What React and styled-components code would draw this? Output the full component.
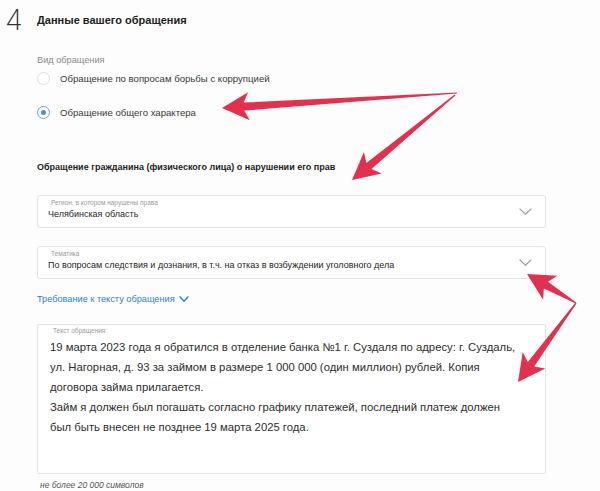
import React from 'react';
import styled, { createGlobalStyle } from 'styled-components';

const Global = createGlobalStyle`
  html, body { margin: 0; padding: 0; background: #fdfdfd; }
  body { font-family: "Liberation Sans", Arial, sans-serif; color: #2b2b2b; }
`;

const Page = styled.div`
  position: relative; width: 600px; height: 491px; overflow: hidden;
  background: #fdfdfd;
`;
const Header = styled.div`
  display: flex; align-items: flex-start; padding: 5px 0 0 5px;
`;
const StepNum = styled.div`
  width: 32px; font-family: Inter, "Liberation Sans", sans-serif;
  font-weight: 200; font-size: 29px; line-height: 30px; color: #333;
`;
const H1 = styled.h1`
  margin: 9px 0 0; font-size: 11px; font-weight: bold; color: #222;
`;
const Content = styled.div`
  margin-left: 37px; width: 509px;
`;
const Caption = styled.div`
  margin-top: 20px; font-size: 9.2px; color: #8a8a8a;
`;
const RadioRow = styled.label`
  display: flex; align-items: center; gap: 10px;
  margin-top: ${p => p.$top}px; font-size: 9.6px; color: #3a3a3a;
`;
const RadioDot = styled.span`
  position: relative; width: 11px; height: 11px; border-radius: 50%;
  border: 1px solid ${p => p.$on ? '#6fa3d8' : '#dedede'}; background: #fff;
  box-sizing: content-box;
  &::after {
    content: ''; display: ${p => p.$on ? 'block' : 'none'};
    position: absolute; left: 3px; top: 3px; width: 5px; height: 5px;
    border-radius: 50%; background: #4a8fd6;
  }
`;
const H2 = styled.h2`
  margin: 43px 0 0; font-size: 9px; font-weight: bold; color: #1e1e1e;
`;
const Box = styled.div`
  display: flex; align-items: center; box-sizing: border-box;
  height: 33px; margin-top: ${p => p.$top}px;
  border: 1px solid #e4e4e4; border-radius: 3px; background: #fff;
  padding: 0 13px 0 10px;
`;
const BoxText = styled.div`
  flex: 1; display: flex; flex-direction: column; align-self: flex-start;
  padding-top: 2px;
`;
const Tiny = styled.div`
  font-size: 6.5px; color: #9a9a9a; padding-left: 3px; line-height: 9px;
`;
const Value = styled.div`
  font-size: 9px; color: #262626; line-height: 14px;
`;
const Link = styled.div`
  display: flex; align-items: center; gap: 4px;
  margin-top: 15px; font-size: 9.2px; color: #2f7fd0;
`;
const Area = styled.div`
  box-sizing: border-box; height: 150px; margin-top: 20px;
  border: 1px solid #e4e4e4; border-radius: 2px; background: #fff;
  padding: 1px 12px 0 12px;
`;
const AreaText = styled.div`
  font-size: 11.3px; line-height: 20px; color: #2e2e2e; margin-top: 2px;
  white-space: nowrap;
`;
const Note = styled.div`
  margin: 6px 0 0 3px; font-size: 8.5px; font-style: italic; color: #555;
`;
const Overlay = styled.svg`
  position: absolute; left: 0; top: 0; pointer-events: none;
`;

const Chevron = ({ w = 13, h = 7, color = '#9a9a9a', sw = 1.2 }) => (
  <svg width={w} height={h} viewBox={`0 0 ${w} ${h}`}>
    <polyline points={`0.6,0.6 ${w / 2},${h - 0.8} ${w - 0.6},0.6`} fill="none" stroke={color} strokeWidth={sw} />
  </svg>
);

// tapered red arrow, tail -> tip
function arrowPts([tx, ty], [px, py], head = 22, hw = 14, sw = 8, barb = 5) {
  const L = Math.hypot(px - tx, py - ty);
  const dx = (px - tx) / L, dy = (py - ty) / L;
  const nx = -dy, ny = dx;
  const bx = px - dx * head, by = py - dy * head;
  const wx = bx - dx * barb, wy = by - dy * barb;
  const pts = [
    [tx + nx * 0.6, ty + ny * 0.6],
    [bx + nx * sw / 2, by + ny * sw / 2],
    [wx + nx * hw, wy + ny * hw],
    [px, py],
    [wx - nx * hw, wy - ny * hw],
    [bx - nx * sw / 2, by - ny * sw / 2],
    [tx - nx * 0.6, ty - ny * 0.6],
  ];
  return pts.map(p => p.map(v => v.toFixed(1)).join(',')).join(' ');
}

const arrows = [
  [[457, 93], [222, 108]],
  [[455, 95], [352, 180]],
  [[576, 303], [527, 274]],
  [[576, 303], [518, 382]],
];

const letter = [
  '19 марта 2023 года я обратился в отделение банка №1 г. Суздаля по адресу: г. Суздаль,',
  'ул. Нагорная, д. 93 за займом в размере 1 000 000 (один миллион) рублей. Копия',
  'договора займа прилагается.',
  'Займ я должен был погашать согласно графику платежей, последний платеж должен',
  'был быть внесен не позднее 19 марта 2025 года.',
];

export default function App() {
  return (
    <Page>
      <Global />
      <Header>
        <StepNum>4</StepNum>
        <H1>Данные вашего обращения</H1>
      </Header>
      <Content>
        <Caption>Вид обращения</Caption>
        <RadioRow $top={7}><RadioDot />Обращение по вопросам борьбы с коррупцией</RadioRow>
        <RadioRow $top={21}><RadioDot $on />Обращение общего характера</RadioRow>
        <H2>Обращение гражданина (физического лица) о нарушении его прав</H2>
        <Box $top={23}>
          <BoxText>
            <Tiny>Регион, в котором нарушены права</Tiny>
            <Value>Челябинская область</Value>
          </BoxText>
          <Chevron />
        </Box>
        <Box $top={18}>
          <BoxText>
            <Tiny>Тематика</Tiny>
            <Value>По вопросам следствия и дознания, в т.ч. на отказ в возбуждении уголовного дела</Value>
          </BoxText>
          <Chevron />
        </Box>
        <Link>Требование к тексту обращения <Chevron w={10} h={6} color="#2f7fd0" sw={1.4} /></Link>
        <Area>
          <Tiny>Текст обращения</Tiny>
          <AreaText>
            {letter.map((l, i) => <div key={i}>{l}</div>)}
          </AreaText>
        </Area>
        <Note>не более 20 000 символов</Note>
      </Content>
      <Overlay width="600" height="491">
        {arrows.map(([t, p], i) => (
          <polygon key={i} points={arrowPts(t, p)} fill="#e2314f" />
        ))}
      </Overlay>
    </Page>
  );
}
